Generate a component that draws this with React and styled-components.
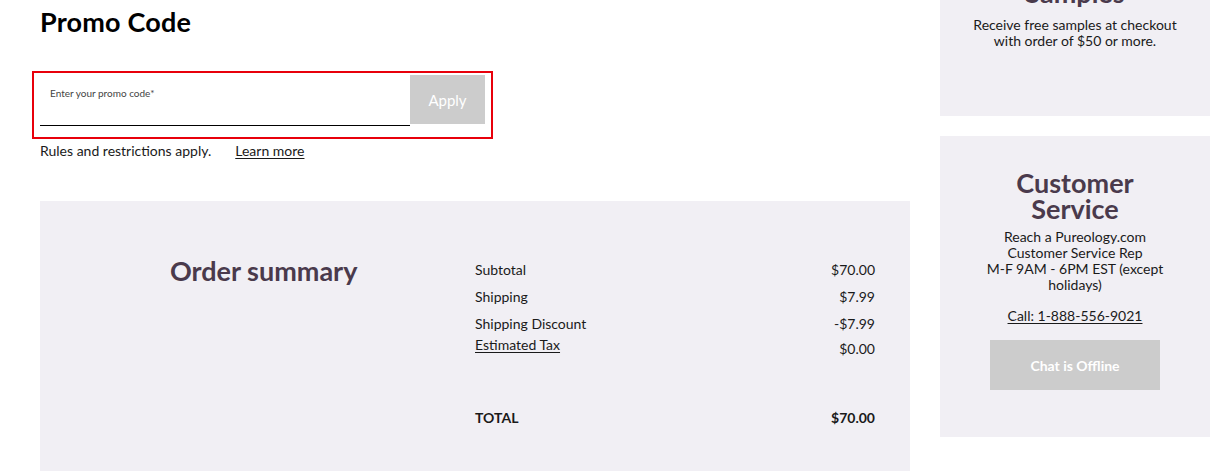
import React from "react";
import styled, { createGlobalStyle } from "styled-components";

const Global = createGlobalStyle`
  html, body { margin: 0; padding: 0; background: #fff; }
  body { font-family: Lato, "Noto Sans", sans-serif; color: #1a1a1a; overflow: hidden; }
  * { box-sizing: border-box; }
`;

const Page = styled.div`
  display: flex;
  gap: 30px;
  padding-left: 40px;
  width: 1220px;
  height: 471px;
  overflow: hidden;
`;

const Main = styled.div`
  width: 870px;
  display: flex;
  flex-direction: column;
`;

const Title = styled.h1`
  margin: 7px 0 0;
  font-size: 27px;
  line-height: 30px;
  font-weight: 700;
  color: #000;
  letter-spacing: 0.2px;
`;

const PromoForm = styled.form`
  margin: 34px 0 0 -8px;
  width: 461px;
  height: 68px;
  border: 2px solid #e8000b;
  padding: 2px 6px 0 6px;
  display: flex;
  align-items: flex-start;
`;

const Field = styled.label`
  flex: 1;
  height: 51px;
  border-bottom: 1px solid #000;
  display: flex;
  flex-direction: column;
  padding: 12px 0 0 10px;
`;

const FieldLabel = styled.span`
  font-size: 10px;
  line-height: 12px;
  color: #444;
`;

const Input = styled.input`
  border: none;
  outline: none;
  background: transparent;
  font: inherit;
  font-size: 14px;
  padding: 0;
  margin-top: 6px;
`;

const GreyButton = styled.button`
  border: none;
  background: #cccccc;
  color: #fff;
  font-family: inherit;
  font-weight: ${(p) => (p.$bold ? 700 : 400)};
  font-size: ${(p) => p.$size || 14}px;
  width: ${(p) => p.$w}px;
  height: ${(p) => p.$h}px;
  cursor: default;
`;

const Rules = styled.div`
  margin-top: 4px;
  display: flex;
  gap: 24px;
  font-size: 14px;
  line-height: 16px;
`;

const Link = styled.a`
  color: inherit;
  text-decoration: underline;
  text-underline-offset: 2px;
`;

const Summary = styled.section`
  margin-top: 42px;
  flex: 1;
  background: #f1eff4;
  display: flex;
  padding: 55px 35px 0 130px;
`;

const SummaryTitle = styled.h2`
  margin: 0;
  flex: 0 0 305px;
  font-size: 27px;
  line-height: 30px;
  font-weight: 700;
  color: #4a3a4c;
`;

const Table = styled.div`
  flex: 1;
  display: flex;
  flex-direction: column;
  font-size: 14px;
  line-height: 16px;
`;

const Row = styled.div`
  display: flex;
  justify-content: space-between;
  align-items: ${(p) => (p.$offset ? "flex-start" : "center")};
  height: ${(p) => p.$h || 27}px;
  font-weight: ${(p) => (p.$total ? 700 : 400)};
`;

const Value = styled.span`
  margin-top: ${(p) => p.$offset || 0}px;
`;

const Side = styled.aside`
  width: 270px;
  display: flex;
  flex-direction: column;
  gap: 20px;
`;

const Card = styled.div`
  background: #f1eff4;
  display: flex;
  flex-direction: column;
  align-items: center;
  text-align: center;
  margin-top: ${(p) => p.$mt || 0}px;
  height: ${(p) => p.$h}px;
  padding: ${(p) => p.$pad};
`;

const CardTitle = styled.h3`
  margin: 0;
  font-size: 27px;
  line-height: 26px;
  font-weight: 700;
  color: #4a3a4c;
`;

const CardText = styled.p`
  margin: ${(p) => p.$m || "0"};
  font-size: 14px;
  line-height: 16px;
  color: #1a1a1a;
`;

export default function App() {
  return (
    <>
      <Global />
      <Page>
        <Main>
          <Title>Promo Code</Title>
          <PromoForm onSubmit={(e) => e.preventDefault()}>
            <Field>
              <FieldLabel>Enter your promo code*</FieldLabel>
              <Input aria-label="promo code" />
            </Field>
            <GreyButton type="button" $w={75} $h={49} $size={15}>
              Apply
            </GreyButton>
          </PromoForm>
          <Rules>
            <span>Rules and restrictions apply.</span>
            <Link href="#">Learn more</Link>
          </Rules>
          <Summary>
            <SummaryTitle>Order summary</SummaryTitle>
            <Table>
              <Row>
                <span>Subtotal</span>
                <span>$70.00</span>
              </Row>
              <Row>
                <span>Shipping</span>
                <span>$7.99</span>
              </Row>
              <Row>
                <span>Shipping Discount</span>
                <span>-$7.99</span>
              </Row>
              <Row $offset $h={67}>
                <Link href="#">Estimated Tax</Link>
                <Value $offset={4}>$0.00</Value>
              </Row>
              <Row $total>
                <span>TOTAL</span>
                <span>$70.00</span>
              </Row>
            </Table>
          </Summary>
        </Main>
        <Side>
          <Card $mt={-20} $h={136} $pad="0 20px">
            <CardTitle>Samples</CardTitle>
            <CardText $m="11px 0 0">
              Receive free samples at checkout
              <br />
              with order of $50 or more.
            </CardText>
          </Card>
          <Card $h={301} $pad="34px 40px 0">
            <CardTitle>
              Customer
              <br />
              Service
            </CardTitle>
            <CardText $m="7px 0 0">
              Reach a Pureology.com
              <br />
              Customer Service Rep
              <br />
              M-F 9AM - 6PM EST (except holidays)
            </CardText>
            <CardText $m="15px 0 0">
              <Link href="#">Call: 1-888-556-9021</Link>
            </CardText>
            <CardText $m="16px 0 0">
              <GreyButton type="button" $w={170} $h={50} $size={14} $bold>
                Chat is Offline
              </GreyButton>
            </CardText>
          </Card>
        </Side>
      </Page>
    </>
  );
}
